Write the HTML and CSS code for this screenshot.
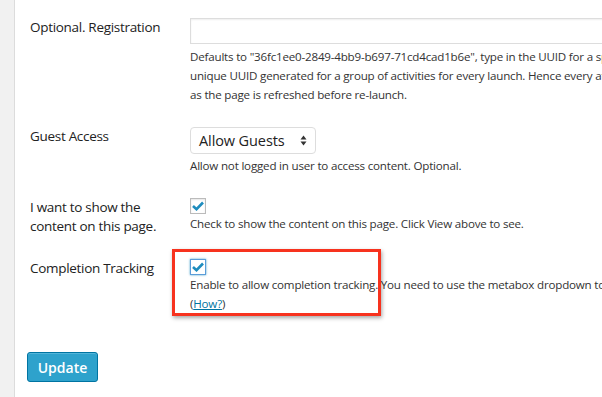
FILE: index.html
```html
<!DOCTYPE html>
<html lang="en">
<head>
    <meta charset="UTF-8">
    <title>Settings</title>
    <link rel="stylesheet" href="styles.css">
</head>
<body>
    <div class="sidebar"></div>
    <div class="content">
        <div class="form-table">
            <div class="row">
                <div class="label">Optional. Registration</div>
                <div class="field">
                    <input type="text" class="text-input">
                    <p class="description">Defaults to "36fc1ee0-2849-4bb9-b697-71cd4cad1b6e", type in the UUID for a specific registration, or leave it blank to use a<br>unique UUID generated for a group of activities for every launch. Hence every attempt will be a new registration<br>as the page is refreshed before re-launch.</p>
                </div>
            </div>
            <div class="row">
                <div class="label">Guest Access</div>
                <div class="field">
                    <div class="select">
                        <span>Allow Guests</span>
                        <svg class="arrows" width="7" height="11" viewBox="0 0 7 11"><path d="M3.5 0.5 L6.5 4.5 H0.5 Z M3.5 10.5 L6.5 6.5 H0.5 Z" fill="#333"/></svg>
                    </div>
                    <p class="description">Allow not logged in user to access content. Optional.</p>
                </div>
            </div>
            <div class="row">
                <div class="label">I want to show the content on this page.</div>
                <div class="field">
                    <span class="checkbox">
                        <svg width="12" height="10" viewBox="0 0 12 10"><path d="M1 5 L4.5 8.2 L11 1.5" fill="none" stroke="#1e8cbe" stroke-width="2.6"/></svg>
                    </span>
                    <p class="description">Check to show the content on this page. Click View above to see.</p>
                </div>
            </div>
            <div class="row last">
                <div class="label">Completion Tracking</div>
                <div class="field">
                    <span class="checkbox focus">
                        <svg width="12" height="10" viewBox="0 0 12 10"><path d="M1 5 L4.5 8.2 L11 1.5" fill="none" stroke="#1e8cbe" stroke-width="2.6"/></svg>
                    </span>
                    <p class="description">Enable to allow completion tracking. You need to use the metabox dropdown to set the completion option.</p>
                    <p class="description">(<a href="#">How?</a>)</p>
                </div>
                <div class="highlight"></div>
            </div>
        </div>
        <button class="button-primary">Update</button>
    </div>
</body>
</html>
```

FILE: styles.css
```css
html {
    overflow: hidden;
}
body {
    margin: 0;
    font-family: "Open Sans", sans-serif;
    font-size: 13px;
    color: #333;
    background: #fff;
    display: flex;
    height: 397px;
    overflow: hidden;
}
.sidebar {
    width: 14px;
    flex-shrink: 0;
    background: #f1f1f1;
    border-right: 1px solid #dcdcdc;
}
.content {
    flex: 1;
    min-width: 0;
    padding: 18px 0 0 15px;
}
.row {
    display: grid;
    grid-template-columns: 160px 1fr;
    margin-bottom: 23px;
    position: relative;
}
.row.last {
    margin-bottom: 39px;
}
.label {
    font-size: 13.5px;
    letter-spacing: -0.3px;
    line-height: 19px;
    color: #222;
    padding-right: 14px;
}
.field {
    min-width: 0;
}
.description {
    margin: 0;
    font-size: 11.6px;
    letter-spacing: -0.2px;
    line-height: 19px;
    color: #333;
    white-space: nowrap;
}
.text-input {
    display: block;
    width: 460px;
    height: 26px;
    box-sizing: border-box;
    border: 1px solid #ddd;
    box-shadow: inset 0 1px 2px rgba(0, 0, 0, 0.07);
    margin: 0 0 2.5px 0;
}
.select {
    width: 126px;
    height: 27px;
    box-sizing: border-box;
    border: 1px solid #ddd;
    border-radius: 4px;
    display: flex;
    align-items: center;
    justify-content: space-between;
    padding: 0 8px 0 8px;
    font-size: 14.5px;
    letter-spacing: -0.1px;
    color: #222;
    margin-bottom: 2.5px;
}
.checkbox {
    display: flex;
    align-items: center;
    justify-content: center;
    width: 16px;
    height: 16px;
    box-sizing: border-box;
    border: 1px solid #bbb;
    box-shadow: inset 0 1px 2px rgba(0, 0, 0, 0.1);
}
.checkbox.focus {
    border-color: #5b9dd9;
    box-shadow: 0 0 2px rgba(30, 140, 190, 0.8);
}
.description a {
    color: #0074a2;
}
.highlight {
    position: absolute;
    left: 142px;
    top: -10px;
    width: 209px;
    height: 67px;
    box-sizing: border-box;
    border: 3px solid #f7321e;
    box-shadow: 1px 2px 4px rgba(0, 0, 0, 0.35);
}
.button-primary {
    margin-left: -3px;
    width: 71px;
    height: 30px;
    background: #2ea2cc;
    border: 1px solid #0074a2;
    border-radius: 3px;
    box-shadow: inset 0 1px 0 rgba(120, 200, 230, 0.5);
    color: #fff;
    font-family: "Open Sans", sans-serif;
    font-size: 14px;
    font-weight: 600;
    cursor: pointer;
}
```
